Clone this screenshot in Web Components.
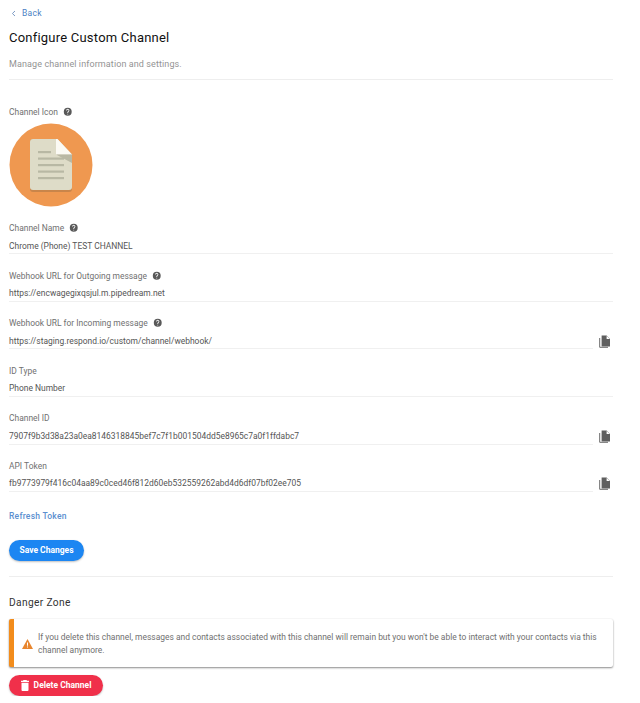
<!DOCTYPE html>
<html>
<head>
<meta charset="utf-8">
<title>Configure Custom Channel</title>
<style>
  html, body { margin: 0; background: #fff; }
  body { font-family: Roboto, "Liberation Sans", sans-serif; color: #333; }
</style>
</head>
<body>
<channel-page></channel-page>

<template id="pageTemplate">
  <style>
    :host { display: block; padding: 8px 27px 0 9px; }
    .back { display: flex; align-items: center; gap: 6px; height: 10px; padding-left: 2px; font-size: 8.5px; letter-spacing: .3px; color: #4a7fc4; }
    .back svg { width: 5px; height: 7px; }
    h1 { margin: 11px 0 0; font-size: 13px; line-height: 18px; font-weight: 400; letter-spacing: .22px; color: #111; }
    .sub { margin: 11px 0 0; font-size: 9px; line-height: 12px; letter-spacing: .1px; color: #939393; }
    hr { margin: 0; border: none; border-top: 1px solid #eee; }
    .top { margin-top: 9px; }
    .iconBlock { margin-top: 26px; }
    .label { display: flex; align-items: center; gap: 5px; height: 12px; font-size: 8.45px; color: #707070; }
    channel-icon { margin-top: 5px; }
    .fields { display: flex; flex-direction: column; gap: 15.3px; margin-top: 15px; }
    .refresh { margin-top: 18px; height: 12px; line-height: 12px; font-size: 8.5px; font-weight: 500; letter-spacing: .25px; color: #5b8fd0; }
    action-button { margin-top: 17.5px; }
    .mid { margin-top: 15px; }
    h2 { margin: 19px 0 0; font-size: 10.2px; line-height: 14px; font-weight: 400; letter-spacing: .35px; color: #333; }
    warn-alert { margin-top: 9px; }
    .del { margin-top: 8px; }
  </style>
  <div class="back">
    <svg viewBox="0 0 5 7"><path d="M4 1 1.4 3.5 4 6" fill="none" stroke="#7d9bc4" stroke-width="1"/></svg>
    <span>Back</span>
  </div>
  <h1>Configure Custom Channel</h1>
  <p class="sub">Manage channel information and settings.</p>
  <hr class="top">
  <div class="iconBlock">
    <div class="label">Channel Icon <help-icon></help-icon></div>
    <channel-icon></channel-icon>
  </div>
  <div class="fields">
    <form-field label="Channel Name" help>Chrome (Phone) TEST CHANNEL</form-field>
    <form-field label="Webhook URL for Outgoing message" help>https://encwagegixqsjul.m.pipedream.net</form-field>
    <form-field label="Webhook URL for Incoming message" help copy>https://staging.respond.io/custom/channel/webhook/</form-field>
    <form-field label="ID Type">Phone Number</form-field>
    <form-field label="Channel ID" copy>7907f9b3d38a23a0ea8146318845bef7c7f1b001504dd5e8965c7a0f1ffdabc7</form-field>
    <form-field label="API Token" copy>fb9773979f416c04aa89c0ced46f812d60eb532559262abd4d6df07bf02ee705</form-field>
  </div>
  <div class="refresh">Refresh Token</div>
  <action-button color="#1c86f2" width="75">Save Changes</action-button>
  <hr class="mid">
  <h2>Danger Zone</h2>
  <warn-alert>If you delete this channel, messages and contacts associated with this channel will remain but you won't be able to interact with your contacts via this channel anymore.</warn-alert>
  <action-button class="del" color="#f0304a" width="94" trash>Delete Channel</action-button>
</template>

<template id="fieldTemplate">
  <style>
    :host { display: block; }
    .label { display: flex; align-items: center; gap: 5px; height: 12px; font-size: 8.45px; color: #707070; }
    .row { display: flex; align-items: center; gap: 6px; margin-top: 5.5px; }
    .value { flex: 1; height: 13.8px; line-height: 12px; font-size: 8.45px; color: #555; border-bottom: 1px solid #f0f0f0; white-space: nowrap; }
    .copy { width: 12px; height: 13px; margin: -2px 2px 0 0; flex: none; }
    :host(:not([copy])) .copy { display: none; }
    :host(:not([help])) help-icon { display: none; }
  </style>
  <div class="label"><span class="text"></span><help-icon></help-icon></div>
  <div class="row">
    <div class="value"><slot></slot></div>
    <svg class="copy" viewBox="0 0 12 13">
      <path d="M0.700 3v9.300h8.300" fill="none" stroke="#6a6a6a" stroke-width="1"/>
      <path d="M2.600 0.600h5l3.400 3.400v7.400H2.600z" fill="#5f5f5f"/>
      <path d="M7.600 0.800v3.200h3.200z" fill="#fff"/>
    </svg>
  </div>
</template>

<template id="helpTemplate">
  <style>
    :host { display: inline-flex; }
    svg { width: 9.5px; height: 9.5px; }
  </style>
  <svg viewBox="0 0 24 24">
    <path fill="#595959" d="M12 2a10 10 0 1 0 0 20 10 10 0 0 0 0-20zm1 17h-2v-2h2v2zm2.070-7.750-.9.920C13.450 12.900 13 13.500 13 15h-2v-.5c0-1.100.45-2.100 1.170-2.830l1.240-1.260A2 2 0 1 0 10 9H8a4 4 0 1 1 7.070 2.250z"/>
  </svg>
</template>

<template id="iconTemplate">
  <style>
    :host { display: block; width: 84px; height: 84px; }
    svg { display: block; width: 84px; height: 84px; }
  </style>
  <svg viewBox="0 0 84 84">
    <circle cx="42" cy="42" r="41.500" fill="#ef9850"/>
    <path d="M21 19a3 3 0 0 1 3-3h24.500L63 31.500V66a3 3 0 0 1-3 3H24a3 3 0 0 1-3-3z" fill="#c9854a"/>
    <path d="M21 19a3 3 0 0 1 3-3h24.500L63 31.500V64a3 3 0 0 1-3 3H24a3 3 0 0 1-3-3z" fill="#dedcc8"/>
    <path d="M47 16h1.500L63 31.500h-16z" fill="#fbfaf4"/>
    <path d="M47 31.500h16V40z" fill="#b9b8a4"/>
    <g fill="#b8b8a4">
      <rect x="29" y="28" width="13" height="2.200"/>
      <rect x="29" y="34.500" width="26" height="2.200"/>
      <rect x="29" y="41" width="26" height="2.200"/>
      <rect x="29" y="47.500" width="26" height="2.200"/>
      <rect x="29" y="54" width="26" height="2.200"/>
    </g>
  </svg>
</template>

<template id="buttonTemplate">
  <style>
    :host { display: block; width: fit-content; }
    .btn { display: flex; align-items: center; justify-content: center; gap: 5px; height: 21px; border-radius: 11px; font-size: 8.5px; font-weight: 700; color: #fff; box-shadow: 0 1px 2px rgba(0,0,0,.25); }
    svg { width: 8px; height: 11px; }
    :host(:not([trash])) svg { display: none; }
  </style>
  <div class="btn">
    <svg viewBox="0 0 8 11">
      <path fill="#fff" d="M2.500 0h3l.5.800h2V2H0V.8h2zM.5 2.700h7V10a1 1 0 0 1-1 1h-5a1 1 0 0 1-1-1z"/>
    </svg>
    <slot></slot>
  </div>
</template>

<template id="alertTemplate">
  <style>
    :host { display: block; }
    .box { display: flex; align-items: center; gap: 5.500px; height: 48px; box-sizing: border-box; padding: 3px 15px 0 7.500px; border-left: 5px solid #f28c1c; border-radius: 2px; background: #fff; box-shadow: 0 1px 2px rgba(0,0,0,.45), 0 0 2px rgba(0,0,0,.06); font-size: 8.45px; line-height: 13.500px; color: #707070; }
    svg { width: 11px; height: 10px; flex: none; }
  </style>
  <div class="box">
    <svg viewBox="0 0 11 10">
      <path fill="#e8862e" d="M5.500 0 11 10H0z"/>
      <path fill="#fff" d="M5 3.500h1v3.300H5zM5 7.500h1v1H5z"/>
    </svg>
    <div><slot></slot></div>
  </div>
</template>

<script>
function tpl(id) {
  return document.getElementById(id).content.cloneNode(true);
}

class ChannelPage extends HTMLElement {
  constructor() {
    super();
    this.attachShadow({ mode: "open" }).appendChild(tpl("pageTemplate"));
  }
}

class FormField extends HTMLElement {
  constructor() {
    super();
    this.attachShadow({ mode: "open" }).appendChild(tpl("fieldTemplate"));
  }

  connectedCallback() {
    this.shadowRoot.querySelector(".text").textContent = this.getAttribute("label");
  }
}

class HelpIcon extends HTMLElement {
  constructor() {
    super();
    this.attachShadow({ mode: "open" }).appendChild(tpl("helpTemplate"));
  }
}

class ChannelIcon extends HTMLElement {
  constructor() {
    super();
    this.attachShadow({ mode: "open" }).appendChild(tpl("iconTemplate"));
  }
}

class ActionButton extends HTMLElement {
  constructor() {
    super();
    this.attachShadow({ mode: "open" }).appendChild(tpl("buttonTemplate"));
  }

  connectedCallback() {
    let btn = this.shadowRoot.querySelector(".btn");
    btn.style.background = this.getAttribute("color");
    btn.style.width = this.getAttribute("width") + "px";
  }
}

class WarnAlert extends HTMLElement {
  constructor() {
    super();
    this.attachShadow({ mode: "open" }).appendChild(tpl("alertTemplate"));
  }
}

customElements.define("help-icon", HelpIcon);
customElements.define("channel-icon", ChannelIcon);
customElements.define("form-field", FormField);
customElements.define("action-button", ActionButton);
customElements.define("warn-alert", WarnAlert);
customElements.define("channel-page", ChannelPage);
</script>
</body>
</html>
